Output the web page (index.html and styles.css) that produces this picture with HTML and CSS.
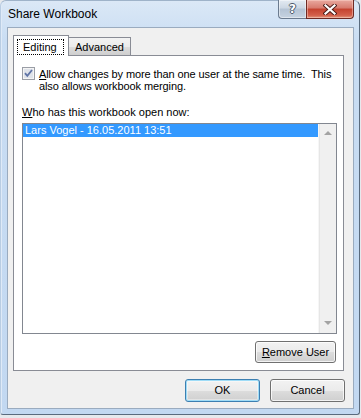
FILE: index.html
```html
<!DOCTYPE html>
<html>
<head>
<meta charset="utf-8">
<link rel="stylesheet" href="styles.css">
</head>
<body>
<div class="window">
  <div class="titlebar">
    <span class="title">Share Workbook</span>
    <div class="caption-btns">
      <div class="cap-btn help"><span class="help-glyph">?</span></div>
      <div class="cap-btn close">
        <svg width="14" height="11" viewBox="0 0 14 11">
          <path d="M2.5 1.5 L11.5 9.5 M11.5 1.5 L2.5 9.5" stroke="#4a1a16" stroke-width="4" stroke-linecap="square" fill="none"/>
          <path d="M2.5 1.5 L11.5 9.5 M11.5 1.5 L2.5 9.5" stroke="#ffffff" stroke-width="2.2" stroke-linecap="square" fill="none"/>
        </svg>
      </div>
    </div>
  </div>
  <div class="client">
    <div class="tabs">
      <div class="tab active"><span class="focus">Editing</span></div>
      <div class="tab">Advanced</div>
    </div>
    <div class="panel">
      <div class="check-row">
        <span class="checkbox">
          <svg width="13" height="13" viewBox="0 0 13 13">
            <rect x="0.5" y="0.5" width="12" height="12" fill="#f4f4f4" stroke="#9a9ea6"/>
            <rect x="2" y="2" width="9" height="9" fill="#dfe3ea"/>
            <path d="M3 6.2 L5.3 8.8 L10 3" stroke="#5f74a6" stroke-width="1.8" fill="none"/>
          </svg>
        </span>
        <div class="check-label">Allow changes by more than one user at the same time.&nbsp; This also allows workbook merging.</div>
      </div>
      <div class="list-label"><u>W</u>ho has this workbook open now:</div>
      <div class="listbox">
        <div class="list-items">
          <div class="item selected">Lars Vogel - 16.05.2011 13:51</div>
        </div>
        <div class="scrollbar">
          <span class="arrow up"></span>
          <span class="arrow down"></span>
        </div>
      </div>
      <div class="panel-actions">
        <button class="btn remove"><u>R</u>emove User</button>
      </div>
    </div>
    <div class="dialog-actions">
      <button class="btn default">OK</button>
      <button class="btn">Cancel</button>
    </div>
  </div>
</div>
</body>
</html>
```
FILE: styles.css
```css
* { box-sizing: border-box; }
html, body { margin: 0; padding: 0; }
body {
  width: 361px;
  height: 418px;
  background: #e6e9ed;
  font-family: "Liberation Sans", Arial, sans-serif;
  font-size: 11px;
  color: #000;
  overflow: hidden;
}
.window {
  width: 360px;
  height: 415px;
  border: 1px solid #5a6b7e;
  border-left-color: #b9cde3;
  border-top-color: #9fb3c9;
  border-radius: 6px 6px 3px 3px;
  background: linear-gradient(to bottom, #dbe8f6 0px, #c9ddf3 40px, #c2d8f1 100%);
  display: flex;
  flex-direction: column;
  padding: 0 5px 5px 6px;
  box-shadow: inset 1px 0 0 #dfeaf7;
}
.titlebar {
  height: 26px;
  display: flex;
  justify-content: space-between;
  align-items: flex-start;
}
.title {
  font-size: 12px;
  line-height: 14px;
  margin-top: 6px;
  margin-left: 1px;
  color: #000;
}
.caption-btns {
  display: flex;
  margin-top: -1px;
}
.cap-btn {
  height: 19px;
  display: flex;
  align-items: center;
  justify-content: center;
  border: 1px solid #6b7b8f;
  border-top: none;
}
.help {
  width: 28px;
  border-radius: 0 0 0 4px;
  border-right: none;
  background: linear-gradient(to bottom, #e3eaf2 0%, #ccd7e3 45%, #b4c3d4 50%, #c6d3e1 100%);
  box-shadow: inset 0 0 0 1px rgba(255,255,255,0.45);
}
.help-glyph {
  font-family: "DejaVu Sans", sans-serif;
  font-size: 12px;
  font-weight: bold;
  color: #fff;
  line-height: 12px;
  text-shadow: -1px 0 #4c5a6b, 1px 0 #4c5a6b, 0 -1px #4c5a6b, 0 1px #4c5a6b;
}
.close {
  width: 48px;
  border-color: #6e2a24;
  border-radius: 0 0 4px 0;
  background: linear-gradient(to bottom, #e9a99f 0%, #d77a6d 45%, #c4422f 50%, #d3604b 85%, #e29a7f 100%);
  box-shadow: inset 0 0 0 1px rgba(255,220,210,0.45);
}
.client {
  flex: 1;
  background: #f0f0f0;
  border: 1px solid #9aabbf;
  display: flex;
  flex-direction: column;
  padding: 7px 8px 6px 5px;
}
.tabs {
  display: flex;
  align-items: flex-end;
  height: 21px;
  margin-bottom: -1px;
  position: relative;
  z-index: 1;
}
.tab {
  border: 1px solid #898c95;
  border-bottom: none;
  font-size: 11px;
  line-height: 13px;
}
.tab.active {
  width: 56px;
  height: 21px;
  background: #fff;
  padding: 3px 0 0 3px;
}
.focus {
  display: block;
  width: 47px;
  height: 16px;
  outline: 1px dotted #000;
  outline-offset: -1px;
  padding: 2px 0 0 6px;
}
.tab:not(.active) {
  width: 62px;
  height: 18px;
  margin-bottom: 1px;
  border-left: none;
  background: linear-gradient(to bottom, #f3f3f3 0%, #ebebeb 50%, #dddddd 51%, #cfcfcf 100%);
  padding: 3px 0 0 6px;
}
.panel {
  width: 331px;
  height: 316px;
  background: #fff;
  border: 1px solid #898c95;
  padding: 11px 3px 0 8px;
  display: flex;
  flex-direction: column;
}
.check-row {
  display: flex;
  align-items: flex-start;
}
.checkbox {
  width: 13px;
  height: 13px;
  flex: none;
  display: block;
}
.checkbox svg { display: block; }
.check-label {
  margin-left: 4px;
  margin-top: 1px;
  line-height: 12px;
  width: 300px;
  letter-spacing: -0.1px;
}
.check-label::first-letter {
  text-decoration: underline;
}
.list-label {
  margin-top: 14px;
  line-height: 12px;
}
.listbox {
  margin-top: 5px;
  width: 315px;
  height: 211px;
  border: 1px solid #828790;
  display: flex;
}
.list-items {
  flex: 1;
  background: #fff;
}
.item {
  height: 13px;
  line-height: 13px;
  padding-left: 2px;
}
.item.selected {
  background: #3399ff;
  color: #fff;
}
.scrollbar {
  width: 18px;
  background: #f0f0f0;
  border-left: 1px solid #f6f6f6;
  box-shadow: inset 1px 0 0 #e6e6e6;
  display: flex;
  flex-direction: column;
  justify-content: space-between;
  align-items: center;
  padding: 7px 0 8px 0;
}
.arrow {
  width: 0;
  height: 0;
  border-left: 4px solid transparent;
  border-right: 4px solid transparent;
}
.arrow.up { border-bottom: 4px solid #a3a3a3; }
.arrow.down { border-top: 4px solid #a3a3a3; }
.panel-actions {
  display: flex;
  justify-content: flex-end;
  margin-top: 7px;
  padding-right: 4px;
}
.btn {
  font-family: "Liberation Sans", Arial, sans-serif;
  font-size: 11px;
  color: #000;
  border: 1px solid #707070;
  border-radius: 3px;
  background: linear-gradient(to bottom, #f2f2f2 0%, #ebebeb 50%, #dddddd 51%, #cfcfcf 100%);
  box-shadow: inset 0 0 0 1px rgba(255,255,255,0.75);
  padding: 0;
  margin: 0;
  line-height: 13px;
}
.btn.remove {
  width: 81px;
  height: 22px;
}
.dialog-actions {
  display: flex;
  justify-content: flex-end;
  gap: 10px;
  margin-top: 8px;
}
.dialog-actions .btn {
  width: 75px;
  height: 23px;
}
.btn.default {
  border-color: #3c7fb1;
  box-shadow: inset 0 0 0 1px #9fdcf7, inset 0 0 0 2px rgba(255,255,255,0.4);
}
```
